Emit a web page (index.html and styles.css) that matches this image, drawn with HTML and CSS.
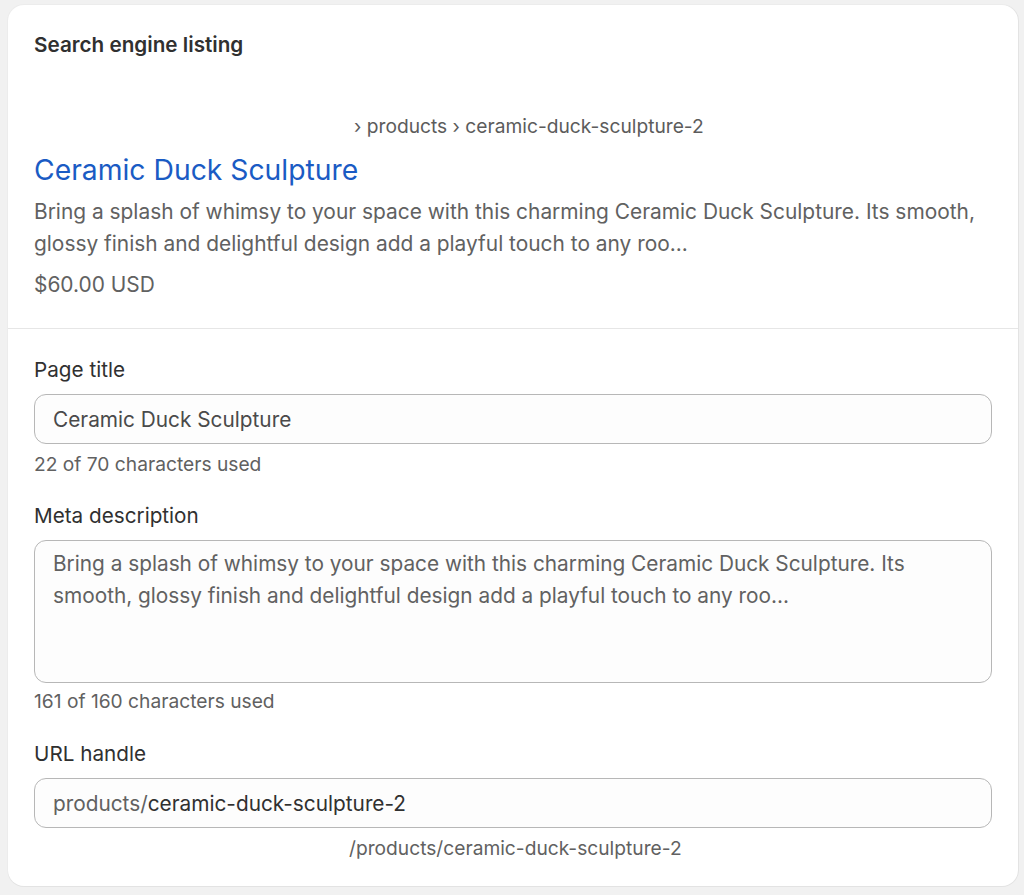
FILE: index.html
```html
<!DOCTYPE html>
<html lang="en">
<head>
<meta charset="utf-8">
<title>Search engine listing</title>
<link rel="stylesheet" href="styles.css">
</head>
<body>
<div class="card">
  <section class="preview">
    <h2 class="card-title">Search engine listing</h2>
    <div class="crumbs">› products › ceramic-duck-sculpture-2</div>
    <div class="serp-title">Ceramic Duck Sculpture</div>
    <p class="serp-desc">Bring a splash of whimsy to your space with this charming Ceramic Duck Sculpture. Its smooth, glossy finish and delightful design add a playful touch to any roo...</p>
    <div class="serp-price">$60.00 USD</div>
  </section>
  <section class="form">
    <div class="field">
      <label class="label">Page title</label>
      <div class="input">Ceramic Duck Sculpture</div>
      <div class="help">22 of 70 characters used</div>
    </div>
    <div class="field">
      <label class="label">Meta description</label>
      <div class="input textarea">Bring a splash of whimsy to your space with this charming Ceramic Duck Sculpture. Its smooth, glossy finish and delightful design add a playful touch to any roo...</div>
      <div class="help">161 of 160 characters used</div>
    </div>
    <div class="field field-url">
      <label class="label">URL handle</label>
      <div class="input"><span class="prefix">products/</span><span class="value">ceramic-duck-sculpture-2</span></div>
      <div class="url-foot">/products/ceramic-duck-sculpture-2</div>
    </div>
  </section>
</div>
</body>
</html>
```
FILE: styles.css
```css
html, body {
  margin: 0;
  padding: 0;
}
body {
  background: #f1f1f1;
  font-family: "Inter", "Liberation Sans", sans-serif;
  color: #303030;
  padding: 5px 6px 9px 8px;
}
.card {
  background: #ffffff;
  border-radius: 16px;
  box-shadow: 0 1px 0 #e3e3e3, 1px 0 0 #e3e3e3, 0 0 0 1px #ececec;
  height: 881px;
  box-sizing: border-box;
  overflow: hidden;
}
.preview {
  padding: 26px 26px 29px 26px;
  border-bottom: 1px solid #e6e6e6;
}
.card-title {
  margin: 0;
  font-size: 20.7px;
  font-weight: 600;
  line-height: 28px;
  color: #303030;
}
.crumbs {
  margin-top: 53px;
  padding-left: 320px;
  font-size: 19.2px;
  line-height: 28px;
  color: #5c5c5c;
}
.serp-title {
  margin-top: 12px;
  font-size: 28.3px;
  line-height: 36px;
  color: #1a5bc4;
}
.serp-desc {
  margin: 8px 0 0;
  font-size: 20.9px;
  line-height: 32px;
  color: #616161;
}
.serp-price {
  margin-top: 11px;
  font-size: 20.9px;
  line-height: 28px;
  color: #616161;
}
.form {
  padding: 27px 26px 0 26px;
  display: flex;
  flex-direction: column;
  gap: 26px;
}
.field {
  display: flex;
  flex-direction: column;
}
.field-url {
  margin-top: 1px;
}
.label {
  font-size: 20.7px;
  line-height: 28px;
  color: #303030;
  margin-bottom: 10px;
}
.input {
  box-sizing: border-box;
  height: 50px;
  border: 1px solid #b7b7b7;
  border-radius: 12px;
  background: #fdfdfd;
  padding: 0 18px;
  display: flex;
  align-items: center;
  font-size: 20.8px;
  color: #4a4a4a;
}
.textarea {
  display: block;
  height: 143px;
  padding: 7px 18px;
  line-height: 32px;
  color: #616161;
}
.prefix {
  color: #616161;
}
.value {
  color: #303030;
}
.help {
  margin-top: 8px;
  font-size: 19.2px;
  line-height: 24px;
  color: #616161;
}
.textarea + .help {
  margin-top: 6px;
}
.url-foot {
  margin-top: 8px;
  padding-left: 315px;
  font-size: 19.2px;
  line-height: 24px;
  color: #616161;
}
```
